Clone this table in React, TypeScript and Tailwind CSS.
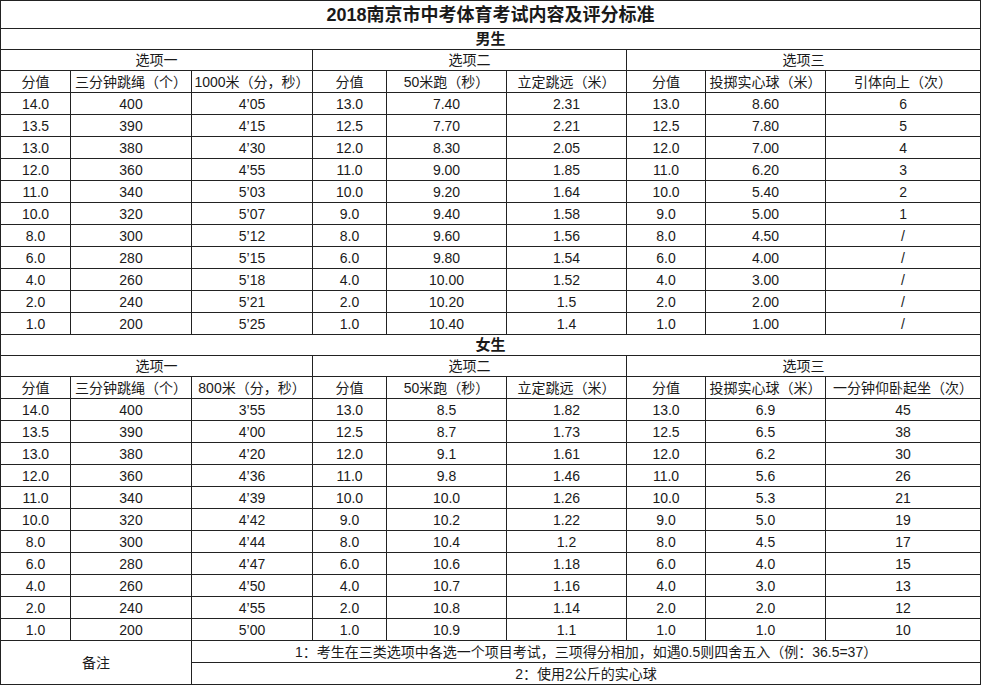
import React from "react";

type Row = string[];

const male: Row[] = [
  ["14.0", "400", "4’05", "13.0", "7.40", "2.31", "13.0", "8.60", "6"],
  ["13.5", "390", "4’15", "12.5", "7.70", "2.21", "12.5", "7.80", "5"],
  ["13.0", "380", "4’30", "12.0", "8.30", "2.05", "12.0", "7.00", "4"],
  ["12.0", "360", "4’55", "11.0", "9.00", "1.85", "11.0", "6.20", "3"],
  ["11.0", "340", "5’03", "10.0", "9.20", "1.64", "10.0", "5.40", "2"],
  ["10.0", "320", "5’07", "9.0", "9.40", "1.58", "9.0", "5.00", "1"],
  ["8.0", "300", "5’12", "8.0", "9.60", "1.56", "8.0", "4.50", "/"],
  ["6.0", "280", "5’15", "6.0", "9.80", "1.54", "6.0", "4.00", "/"],
  ["4.0", "260", "5’18", "4.0", "10.00", "1.52", "4.0", "3.00", "/"],
  ["2.0", "240", "5’21", "2.0", "10.20", "1.5", "2.0", "2.00", "/"],
  ["1.0", "200", "5’25", "1.0", "10.40", "1.4", "1.0", "1.00", "/"],
];

const female: Row[] = [
  ["14.0", "400", "3’55", "13.0", "8.5", "1.82", "13.0", "6.9", "45"],
  ["13.5", "390", "4’00", "12.5", "8.7", "1.73", "12.5", "6.5", "38"],
  ["13.0", "380", "4’20", "12.0", "9.1", "1.61", "12.0", "6.2", "30"],
  ["12.0", "360", "4’36", "11.0", "9.8", "1.46", "11.0", "5.6", "26"],
  ["11.0", "340", "4’39", "10.0", "10.0", "1.26", "10.0", "5.3", "21"],
  ["10.0", "320", "4’42", "9.0", "10.2", "1.22", "9.0", "5.0", "19"],
  ["8.0", "300", "4’44", "8.0", "10.4", "1.2", "8.0", "4.5", "17"],
  ["6.0", "280", "4’47", "6.0", "10.6", "1.18", "6.0", "4.0", "15"],
  ["4.0", "260", "4’50", "4.0", "10.7", "1.16", "4.0", "3.0", "13"],
  ["2.0", "240", "4’55", "2.0", "10.8", "1.14", "2.0", "2.0", "12"],
  ["1.0", "200", "5’00", "1.0", "10.9", "1.1", "1.0", "1.0", "10"],
];

const maleHead = [
  "分值",
  "三分钟跳绳（个）",
  "1000米（分，秒）",
  "分值",
  "50米跑（秒）",
  "立定跳远（米）",
  "分值",
  "投掷实心球（米）",
  "引体向上（次）",
];

const femaleHead = [
  "分值",
  "三分钟跳绳（个）",
  "800米（分，秒）",
  "分值",
  "50米跑（秒）",
  "立定跳远（米）",
  "分值",
  "投掷实心球（米）",
  "一分钟仰卧起坐（次）",
];

const cell = "border border-[#222] p-0 text-center whitespace-nowrap overflow-hidden";

function Section({ title, head, rows }: { title: string; head: string[]; rows: Row[] }) {
  return (
    <>
      <tr className="h-[21px]">
        <td colSpan={9} className={`${cell} font-bold text-[15px]`}>
          {title}
        </td>
      </tr>
      <tr className="h-[21px]">
        <td colSpan={3} className={cell}>选项一</td>
        <td colSpan={3} className={cell}>选项二</td>
        <td colSpan={3} className={cell}>选项三</td>
      </tr>
      <tr className="h-[22px]">
        {head.map((h, i) => (
          <td key={i} className={cell}>
            {h}
          </td>
        ))}
      </tr>
      {rows.map((r, i) => (
        <tr key={i} className="h-[22px]">
          {r.map((v, j) => (
            <td key={j} className={cell}>
              {v}
            </td>
          ))}
        </tr>
      ))}
    </>
  );
}

export default function App() {
  return (
    <div className="w-[984px] h-[688px] bg-white text-[#1a1a1a] overflow-hidden">
      <table
        className="table-fixed border-collapse w-[980px] text-[14px] leading-[20px]"
        style={{ fontFamily: '"Liberation Sans", "Noto Sans CJK SC", sans-serif' }}
      >
        <colgroup>
          <col className="w-[70px]" />
          <col className="w-[121px]" />
          <col className="w-[121px]" />
          <col className="w-[74px]" />
          <col className="w-[120px]" />
          <col className="w-[120px]" />
          <col className="w-[79px]" />
          <col className="w-[120px]" />
          <col className="w-[155px]" />
        </colgroup>
        <tbody>
          <tr className="h-[28px]">
            <td colSpan={9} className={`${cell} font-bold text-[18px]`}>
              2018南京市中考体育考试内容及评分标准
            </td>
          </tr>
          <Section title="男生" head={maleHead} rows={male} />
          <Section title="女生" head={femaleHead} rows={female} />
          <tr className="h-[22px]">
            <td colSpan={2} rowSpan={2} className={cell}>
              备注
            </td>
            <td colSpan={7} className={cell}>
              1：考生在三类选项中各选一个项目考试，三项得分相加，如遇0.5则四舍五入（例：36.5=37）
            </td>
          </tr>
          <tr className="h-[22px]">
            <td colSpan={7} className={cell}>
              2：使用2公斤的实心球
            </td>
          </tr>
        </tbody>
      </table>
    </div>
  );
}
